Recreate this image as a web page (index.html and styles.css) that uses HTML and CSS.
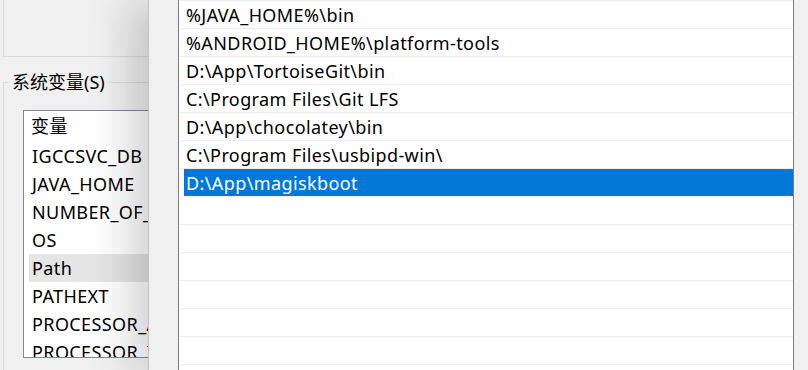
FILE: index.html
```html
<!DOCTYPE html>
<html lang="zh-CN">
<head>
    <meta charset="UTF-8">
    <title>编辑环境变量</title>
    <link rel="stylesheet" href="styles.css">
</head>
<body>
    <div class="env-window">
        <div class="group user-group"></div>
        <div class="group system-group">
            <div class="legend">系统变量(S)</div>
            <div class="var-list">
                <div class="var-header">变量</div>
                <div class="var-row">IGCCSVC_DB</div>
                <div class="var-row">JAVA_HOME</div>
                <div class="var-row">NUMBER_OF_PROCESSORS</div>
                <div class="var-row">OS</div>
                <div class="var-row active">Path</div>
                <div class="var-row">PATHEXT</div>
                <div class="var-row">PROCESSOR_ARCHITECTURE</div>
                <div class="var-row">PROCESSOR_IDENTIFIER</div>
            </div>
        </div>
    </div>

    <div class="edit-dialog">
        <div class="path-list">
            <div class="path-row"><span class="cell">%JAVA_HOME%\bin</span></div>
            <div class="path-row"><span class="cell">%ANDROID_HOME%\platform-tools</span></div>
            <div class="path-row"><span class="cell">D:\App\TortoiseGit\bin</span></div>
            <div class="path-row"><span class="cell">C:\Program Files\Git LFS</span></div>
            <div class="path-row"><span class="cell">D:\App\chocolatey\bin</span></div>
            <div class="path-row"><span class="cell">C:\Program Files\usbipd-win\</span></div>
            <div class="path-row selected"><span class="cell">D:\App\magiskboot</span></div>
            <div class="path-row"><span class="cell"></span></div>
            <div class="path-row"><span class="cell"></span></div>
            <div class="path-row"><span class="cell"></span></div>
            <div class="path-row"><span class="cell"></span></div>
            <div class="path-row"><span class="cell"></span></div>
            <div class="path-row"><span class="cell"></span></div>
            <div class="path-row"><span class="cell"></span></div>
        </div>
    </div>
</body>
</html>
```

FILE: styles.css
```css
body {
    margin: 0;
    width: 808px;
    height: 370px;
    overflow: hidden;
    display: flex;
    background: #f0f0f0;
    font-family: "Noto Sans", "Noto Sans CJK SC", sans-serif;
    font-size: 18px;
    letter-spacing: 0.4px;
    color: #000;
}
.env-window {
    width: 148px;
    flex-shrink: 0;
    overflow: hidden;
    background: #f0f0f0;
}
.group {
    margin-left: 3px;
    border-left: 1px solid #dcdcdc;
}
.user-group {
    height: 56px;
    border-bottom: 1px solid #dcdcdc;
}
.system-group {
    margin-top: 25px;
    border-top: 1px solid #dcdcdc;
    height: 320px;
}
.legend {
    display: inline-block;
    margin: -13px 0 0 4px;
    padding: 0 4px;
    background: #f0f0f0;
    line-height: 24px;
    height: 24px;
    vertical-align: top;
    letter-spacing: 0;
}
.var-list {
    margin: 3px 0 0 19px;
    width: 220px;
    height: 246px;
    background: #fff;
    border: 1px solid #828790;
    overflow: hidden;
}
.var-header {
    height: 31px;
    line-height: 31px;
    padding-left: 7px;
    white-space: nowrap;
}
.var-row {
    height: 28px;
    line-height: 28px;
    margin-left: 5px;
    padding-left: 3px;
    white-space: nowrap;
}
.var-row.active {
    background: #e5e5e5;
}
.edit-dialog {
    flex: 1;
    background: #f0f0f0;
    border-left: 1px solid #c4c4c4;
    padding-left: 29px;
    padding-right: 14px;
    box-shadow: -18px 0 40px rgba(0, 0, 0, 0.18);
}
.path-list {
    height: 370px;
    background: #fff;
    border-left: 1px solid #7a7f87;
    border-right: 1px solid #7a7f87;
    padding-left: 1px;
    overflow: hidden;
}
.path-row {
    height: 27px;
    border-top: 1px solid #ececec;
}
.path-row .cell {
    display: block;
    height: 27px;
    line-height: 28px;
    margin-left: 4px;
    padding-left: 2px;
    white-space: nowrap;
}
.path-row.selected .cell {
    background: #0078d7;
    color: #fff;
}
```
